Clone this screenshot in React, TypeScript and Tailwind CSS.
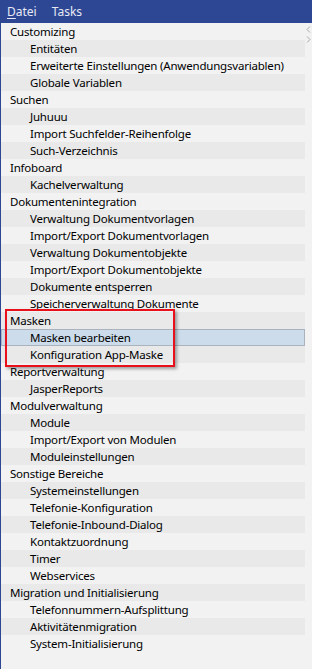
import React from "react";

type Group = { title: string; items: string[] };

const groups: Group[] = [
  { title: "Customizing", items: ["Entitäten", "Erweiterte Einstellungen (Anwendungsvariablen)", "Globale Variablen"] },
  { title: "Suchen", items: ["Juhuuu", "Import Suchfelder-Reihenfolge", "Such-Verzeichnis"] },
  { title: "Infoboard", items: ["Kachelverwaltung"] },
  {
    title: "Dokumentenintegration",
    items: [
      "Verwaltung Dokumentvorlagen",
      "Import/Export Dokumentvorlagen",
      "Verwaltung Dokumentobjekte",
      "Import/Export Dokumentobjekte",
      "Dokumente entsperren",
      "Speicherverwaltung Dokumente",
    ],
  },
  { title: "Masken", items: ["Masken bearbeiten", "Konfiguration App-Maske"] },
  { title: "Reportverwaltung", items: ["JasperReports"] },
  { title: "Modulverwaltung", items: ["Module", "Import/Export von Modulen", "Moduleinstellungen"] },
  {
    title: "Sonstige Bereiche",
    items: [
      "Systemeinstellungen",
      "Telefonie-Konfiguration",
      "Telefonie-Inbound-Dialog",
      "Kontaktzuordnung",
      "Timer",
      "Webservices",
    ],
  },
  { title: "Migration und Initialisierung", items: ["Telefonnummern-Aufsplittung", "Aktivitätenmigration", "System-Initialisierung"] },
];

type Row = { text: string; sub: boolean };

const rows: Row[] = groups.flatMap((g) => [
  { text: g.title, sub: false },
  ...g.items.map((t) => ({ text: t, sub: true })),
]);

const Line = ({ row, index }: { row: Row; index: number }) => {
  const selected = row.text === "Masken bearbeiten";
  const stripe = index % 2 === 1 ? "bg-[#e9e9e9]" : "bg-[#f2f2f2]";
  return (
    <div
      className={`h-[17px] flex items-center whitespace-nowrap ${
        selected ? "bg-[#cddcea] border border-[#aab2bd]" : `${stripe} border border-transparent`
      } ${row.sub ? "pl-[28px]" : "pl-[8px]"}`}
    >
      {row.text}
    </div>
  );
};

export default function App() {
  const maskStart = rows.findIndex((r) => r.text === "Masken");
  const before = rows.slice(0, maskStart);
  const masks = rows.slice(maskStart, maskStart + 3);
  const after = rows.slice(maskStart + 3);

  return (
    <div
      className="w-[312px] h-[669px] bg-[#f2f2f2] text-[11.5px] tracking-[-0.2px] text-black flex flex-col overflow-hidden border-l border-[#2e4795]"
      style={{ fontFamily: '"Noto Sans", "Segoe UI", sans-serif' }}
    >
      <div className="h-[23px] bg-[#2e4795] text-[#e6eaf4] text-[12px] tracking-normal flex items-center gap-[15px] pl-[6px] shrink-0">
        <span>
          <span className="underline underline-offset-2">D</span>atei
        </span>
        <span>Tasks</span>
      </div>
      <div className="flex">
        <div className="w-[304px]">
          {before.map((r, i) => (
            <Line key={r.text} row={r} index={i} />
          ))}
          <div className="relative">
            {masks.map((r, i) => (
              <Line key={r.text} row={r} index={maskStart + i} />
            ))}
            <div className="absolute left-[4px] top-[-3px] w-[170px] h-[58px] border-2 border-[#e8101a] shadow-[2px_2px_3px_rgba(0,0,0,0.35)] pointer-events-none" />
          </div>
          {after.map((r, i) => (
            <Line key={r.text} row={r} index={maskStart + 3 + i} />
          ))}
        </div>
        <div className="flex-1 flex flex-col items-center gap-[3px] pt-[3px]">
          <svg width="5" height="7" viewBox="0 0 5 7" fill="none" stroke="#a8a8a8" strokeWidth="1">
            <path d="M4 0.5 L1 3.5 L4 6.5" />
          </svg>
          <svg width="5" height="7" viewBox="0 0 5 7" fill="none" stroke="#a8a8a8" strokeWidth="1">
            <path d="M1 0.5 L4 3.5 L1 6.5" />
          </svg>
        </div>
      </div>
    </div>
  );
}
